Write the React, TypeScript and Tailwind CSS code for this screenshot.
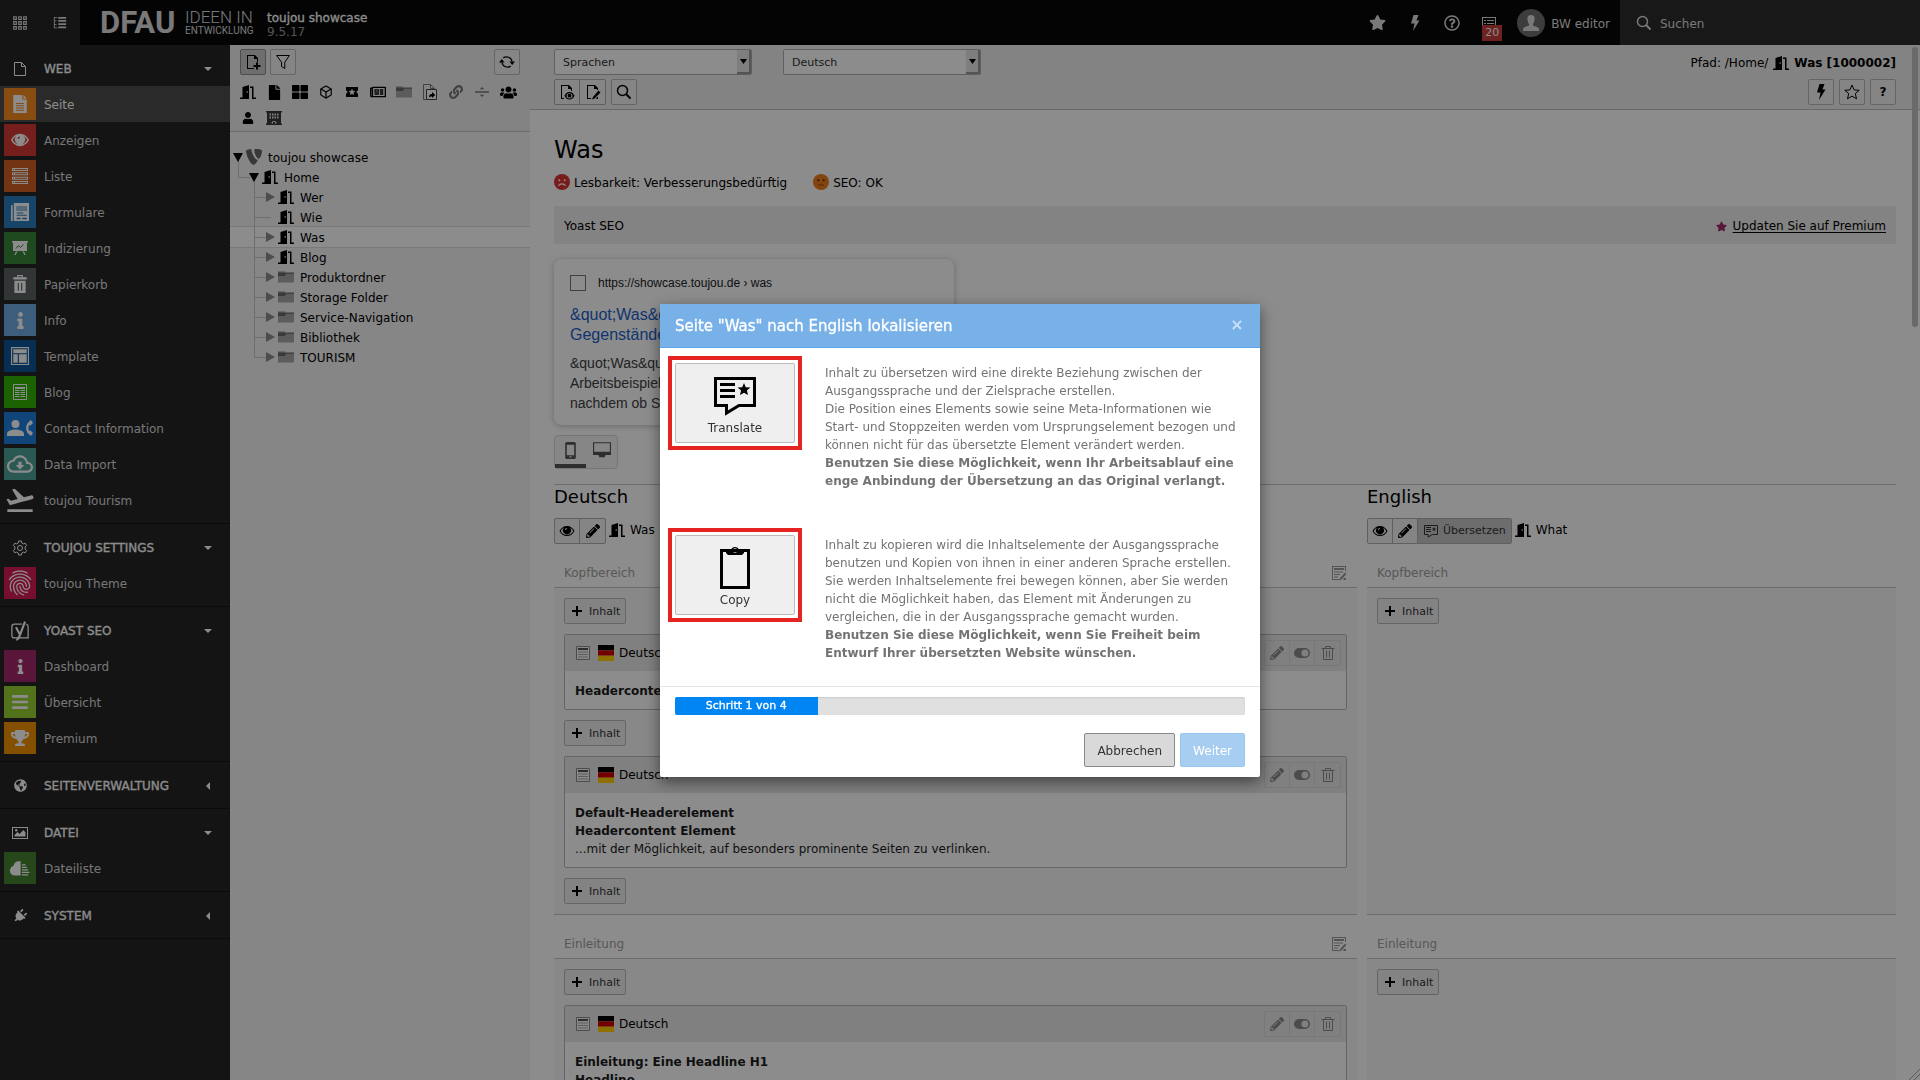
import type { ReactNode } from "react";
import {
  FaFile, FaThLarge, FaRegNewspaper, FaLink, FaUsers, FaUser, FaTrophy, FaBars, FaInfo,
  FaPlug, FaGlobeAmericas, FaStar, FaRegQuestionCircle, FaPencilAlt,
} from "react-icons/fa";
import { MdFlightTakeoff, MdFingerprint, MdOutlineCloudDownload } from "react-icons/md";
import { FiBox } from "react-icons/fi";

/* ---------- Icons ---------- */

type SvgProps = { size?: number; className?: string; children: ReactNode; stroke?: boolean };

function Svg({ size = 16, className = "", children, stroke }: SvgProps) {
  return (
    <svg
      width={size}
      height={size}
      viewBox="0 0 16 16"
      fill={stroke ? "none" : "currentColor"}
      stroke={stroke ? "currentColor" : "none"}
      className={`shrink-0 ${className}`}
      aria-hidden="true"
    >
      {children}
    </svg>
  );
}

const Pencil = () => <FaPencilAlt size={14} />;
const Door = () => (
  <Svg>
    <path fillRule="evenodd" d="M0 13.500h2.500V3L9 1v14H0zM6.600 7.200v1.600h1.200V7.200z" />
    <path d="M10 2.500h3.500v11H16V15h-4V4h-2z" />
  </Svg>
);
const Bolt = () => (
  <Svg>
    <path d="M6.500 0h5L9.500 5.500h3L6 16l1.500-7.500H4z" />
  </Svg>
);

const Eye = () => (
  <Svg>
    <path fillRule="evenodd" d="M8 3C4.500 3 2 5 .5 8 2 11 4.500 13 8 13s6-2 7.500-5C14 5 11.500 3 8 3zm0 9C5 12 3 10.500 1.700 8 2.500 6.500 3.600 5.400 5 4.700a4 4 0 1 0 6 0c1.400.7 2.500 1.800 3.300 3.300C13 10.500 11 12 8 12zM6 7a2 2 0 0 1 2-2v1a1 1 0 0 0-1 1z" />
  </Svg>
);
const Folder = () => (
  <Svg>
    <path fill="#a8a8a8" d="M0 4h16v9.500H0z" />
    <path fill="#6a6a6a" d="M0 3.500h16v1.300H8L7 7H0z" />
    <path fill="#8a8a8a" d="M0 2.500h7v1.500H0z" />
  </Svg>
);
const PageOutline = () => (
  <Svg stroke>
    <path d="M2.500 1.500h7l4 4v9h-11zM9.500 1.500v4h4" />
  </Svg>
);
const PageNew = () => (
  <Svg>
    <path d="M2 1h8l3 3v4h-1V5H9V2H3v12h6v1H2z" />
    <path d="M11 8.500h2V11h2.500v2H13v2.500h-2V13H8.500v-2H11z" />
  </Svg>
);
const PageEye = () => (
  <Svg>
    <path d="M2 1h8l3 3v3h-1V5H9V2H3v12h2v1H2z" />
    <path fillRule="evenodd" d="M10.500 8C8 8 6.500 9.500 5.500 11.700 6.500 14 8 15.500 10.500 15.500s4-1.500 5-3.800C14.500 9.500 13 8 10.500 8zm0 1.200a3 2.600 0 1 1 0 5.200 3 2.600 0 0 1 0-5.200z" />
    <circle cx="10.500" cy="11.700" r="1.900" />
  </Svg>
);
const PageEdit = () => (
  <Svg>
    <path d="M2 1h8l3 3v2h-1V5H9V2H3v12h3v1H2zM12 13h1v2h-2z" />
    <path d="M13.500 6.500 15.500 8.500 9.500 14.500 7 15.500 8 13z" />
  </Svg>
);
const Magnifier = () => (
  <Svg stroke>
    <circle cx="6.500" cy="6.500" r="5" strokeWidth="1.500" />
    <path d="m10.300 10.300 4.200 4.200" strokeWidth="2" />
  </Svg>
);
const Funnel = () => (
  <Svg stroke>
    <path d="M1.600 1.500h12.800L9.800 8.200v6.300L6.500 12.500V8.200z" />
  </Svg>
);
const Refresh = () => (
  <Svg>
    <path fill="none" stroke="currentColor" strokeWidth="1.300" d="M4.200 4A5.500 5.500 0 0 1 13 7.500M11.800 12A5.500 5.500 0 0 1 3 8.500" />
    <path d="M10.500 7.500H16L13.200 11zM0 8.500h5.500L2.800 5z" />
  </Svg>
);
const TicketStar = () => (
  <Svg>
    <path fillRule="evenodd" d="M2 3h12v3.500a1.500 1.500 0 0 0 0 3V13H2V9.500a1.500 1.500 0 0 0 0-3zm6 1.600-1 2.200-2.400.3 1.800 1.600-.5 2.400L8 9.900l2.100 1.200-.5-2.400 1.800-1.600L9 6.800z" />
  </Svg>
);
const Shortcut = () => (
  <Svg>
    <path fill="none" stroke="#777" d="M4.500 15.500h-3V.5h7l4 4v1M8.500.5v4h4" />
    <path fill="#fff" stroke="#444" d="M4.500 5.500h10v10h-10z" />
    <path fill="#000" d="M7 13.500c0-2.500 1-3.500 3-3.500V8l3.300 3-3.300 3v-1.500c-1.300 0-2.200.1-3 1z" />
  </Svg>
);
const Divider = () => (
  <Svg>
    <path d="M1 7.200h14v1.600H1zM8 3l2.200 2.200H5.800zM8 13l2.200-2.200H5.800z" />
  </Svg>
);
const Building = () => (
  <Svg>
    <path fillRule="evenodd" d="M0 1h16v1.500h-1v11h1V15H0v-1.500h1v-11H0zm3.500 2.500v2h1.500v-2zm2.500 0v2h1.500v-2zm2.500 0v2H10v-2zm2.500 0v2h1.500v-2zm-7.500 3v2h1.500v-2zm2.500 0v2h1.500v-2zm2.500 0v2H10v-2zm2.500 0v2h1.500v-2zM5.500 13.500H7V12h2v1.500h1.500a2.500 2.500 0 0 0-5 0z" />
  </Svg>
);
const Shield = () => (
  <Svg className="text-[#666]">
    <path d="M11.800 10.600c-.3.100-.5.100-.8.100-2.300 0-5.700-8-5.700-10.500 0-.1 0-.1 0-.2C2.500.3 0 1 0 1.900c0 3.500 4.400 13.900 7.600 13.900 1.500 0 3.500-2.300 4.200-5.200zM10.500.1c2.900 0 5.500.5 5.500 2.200 0 3.400-2.200 7.500-3.300 7.500-2 0-4.400-5.500-4.400-8.200 0-1.300.5-1.500 2.200-1.500z" />
  </Svg>
);
const Cog = () => (
  <Svg stroke>
    <path d="M6.700 1h2.600l.5 2 1.500.9 2-.6 1.300 2.200L13.100 7v2l1.500 1.500-1.300 2.200-2-.6-1.500.9-.5 2H6.700l-.5-2-1.500-.9-2 .6-1.300-2.200L2.900 9V7L1.400 5.500l1.300-2.200 2 .6L6.200 3z" />
    <circle cx="8" cy="8" r="2.500" />
  </Svg>
);
const ImageIcon = () => (
  <Svg>
    <path fillRule="evenodd" d="M0 2h16v12H0zm1 1v10h14V3z" />
    <path d="M2.500 11.500V10l3-3L7.500 9l4-4 2 2.500v4z" />
    <circle cx="4.200" cy="5.200" r="1.200" />
  </Svg>
);
const YoastIcon = () => (
  <Svg size={20} stroke>
    <path d="M9.500 2.500H3.500Q1.500 2.500 1.500 4.500v7q0 2 2 2H14.500v-9q0-1.500-1.500-2" />
    <path strokeWidth="1.700" d="M4.800 5 7.700 10.500M12 .5 8 11Q6.800 14.800 5 15" />
  </Svg>
);
const Trash = () => (
  <Svg stroke>
    <path d="M1.500 3.500h13M5.500 3.500v-2h5v2M3.500 3.500v11h9v-11M6.500 5.500v7M9.500 5.500v7" />
  </Svg>
);
const Toggle = () => (
  <Svg>
    <path fillRule="evenodd" d="M5 3h6a5 5 0 0 1 0 10H5A5 5 0 0 1 5 3zm6 1.500a3.500 3.500 0 1 0 0 7 3.500 3.500 0 0 0 0-7z" />
  </Svg>
);
const DocEdit = () => (
  <Svg className="text-[#9a9a9a]">
    <path d="M1 1h14v5h-1V2H2v12h6v1H1z" />
    <path d="M3 3h10v2H3zM3 6.500h9v1H3zM3 9h6v1H3zM3 11.500h4v1H3zM14 7.500l1.500 1.500-5 5.500-2.500 1 1-2.500zM13 13h2v2h-3z" />
  </Svg>
);
const ContentIcon = () => (
  <Svg className="text-[#777]">
    <path fill="#f8f8f8" stroke="#8a8a8a" d="M1.500 1.500h13v13h-13z" />
    <path fill="#555" d="M3 3h10v2H3z" />
    <path fill="#aaa" d="M3 6.500h10v1H3zM3 9h10v1H3zM3 11.500h10v1H3z" />
  </Svg>
);
const Flag = () => (
  <Svg>
    <path fill="#000" d="M0 0h16v5.400H0z" />
    <path fill="#d00000" d="M0 5.400h16v5.300H0z" />
    <path fill="#ffce00" d="M0 10.700h16V16H0z" />
  </Svg>
);
function TranslateIcon({ size = 16 }: { size?: number }) {
  return (
    <svg width={size} height={size} viewBox="0 0 48 48" aria-hidden="true" className="shrink-0">
      <path fill="none" stroke="currentColor" strokeWidth="3" d="M4.500 7.500h39v27H28L15.500 42v-7.500h-11z" />
      <path fill="currentColor" d="M9 12h15v3H9zM9 18h15v3H9zM9 24h15v3H9zM33 12l1.800 4.200 4.600.4-3.500 3 1.100 4.500L33 21.700l-4 2.400 1.100-4.500-3.500-3 4.600-.4z" />
    </svg>
  );
}
const ClipboardIcon = () => (
  <svg width="48" height="48" viewBox="0 0 48 48" aria-hidden="true">
    <path fill="none" stroke="currentColor" strokeWidth="3" d="M10.500 7.500h27v37h-27z" />
    <path fillRule="evenodd" fill="currentColor" d="M15 7h5a4.200 4.200 0 0 1 8 0h5v3l-2 2H17l-2-2zm9-1.800a2.300 2.300 0 1 0 0 4.600 2.300 2.300 0 0 0 0-4.600z" />
  </svg>
);
const StarOutline = () => (
  <Svg stroke>
    <path d="m8 1 2.100 4.900 5.100.4-3.900 3.300 1.200 5.200L8 12.100l-4.500 2.700 1.200-5.200L.8 6.300l5.100-.4z" />
  </Svg>
);
function Face({ sad }: { sad?: boolean }) {
  return (
    <Svg>
      <circle cx="8" cy="8" r="8" fill={sad ? "#dc3232" : "#ee7c1b"} />
      <circle cx="5.300" cy="6.300" r="1" fill={sad ? "#fff" : "#4a2500"} />
      <circle cx="10.700" cy="6.300" r="1" fill={sad ? "#fff" : "#4a2500"} />
      <path
        fill="none"
        stroke={sad ? "#fff" : "#a5571a"}
        strokeWidth="1.200"
        d={sad ? "M4.500 11.800c1.500-2.600 5.500-2.600 7 0" : "M5 11h6"}
      />
    </Svg>
  );
}

/* ---------- Module tiles ---------- */

const TilePage = () => (
  <Svg size={18}>
    <path fillRule="evenodd" d="M2 0h8v4h4v12H2zm2.500 7v1h7V7zm0 2v1h7V9zm0 2v1h7v-1zm0 2v1h7v-1z" />
    <path d="m11 0 3 3h-3z" />
  </Svg>
);
const TileEye = () => (
  <Svg size={18}>
    <path fillRule="evenodd" d="M8 2.500C4.500 2.500 1.500 5 0 8c1.500 3 4.500 5.500 8 5.500s6.500-2.500 8-5.500c-1.500-3-4.500-5.500-8-5.500zm0 9.700C5 12.200 2.700 10.200 1.500 8c.6-1.200 1.600-2.400 3-3.300a4.500 4.500 0 1 0 7 0c1.400.9 2.400 2.100 3 3.300-1.200 2.200-3.500 4.200-6.500 4.200zM5.800 7A2.200 2.200 0 0 1 8 4.800v1A1.300 1.300 0 0 0 6.800 7z" />
  </Svg>
);
const TileList = () => (
  <Svg>
    <path fillRule="evenodd" d="M0 0h16v3H0zm1 1v1h1V1zm2 0v1h12V1zM0 4.300h16v3H0zm1 1v1h1v-1zm2 0v1h12v-1zM0 8.700h16v3H0zm1 1v1h1v-1zm2 0v1h12v-1zM0 13h16v3H0zm1 1v1h1v-1zm2 0v1h12v-1z" />
  </Svg>
);
const TileForm = () => (
  <Svg size={18}>
    <path fillRule="evenodd" d="M2.500 0H16v16H2.500zM5 3v4h9V3zm0 5.500v.8h6v-.8zm0 2v.8h9v-.8zm0 2.500v1.500h3.500V13zm5 0v1.500h4V13z" />
    <path d="M0 2h1.500v14H0z" />
    <path fill="#9cc3e0" d="M5 3h9v4H5z" />
  </Svg>
);
const TileChart = () => (
  <Svg>
    <path d="M0 1h16v1.500h-1v8.500H1V2.500H0zM4 11.500h1.500L3.500 15H2.300zM12 11.500h-1.500l2 3.500h1.200z" />
    <path fill="none" stroke="#3a7a35" d="m4 8.500 2.500-3L8.500 7.500l3-3" />
  </Svg>
);
const TileTrash = () => (
  <Svg size={18}>
    <path fillRule="evenodd" d="M5.500 0h5v2H14v2H2V2h3.500zm1 1v1h3V1zM3 5h10v11H3zm3 2v7h1V7zm3 0v7h1V7z" />
  </Svg>
);
const TileTemplate = () => (
  <Svg size={18}>
    <path fill="none" stroke="currentColor" d="M.5.500h15v15H.5z" />
    <path d="M2 2h12v3.500H2zM2 6.500h4V14H2zM7 6.500h7V14H7z" />
  </Svg>
);
const TileBlog = () => (
  <Svg size={16}>
    <path fill="none" stroke="currentColor" d="M1.500.5h13v15h-13z" />
    <path d="M3 3h10v2H3zM3 6h4.500v1H3zM8.500 6H13v1H8.500zM3 8h4.500v1H3zM8.500 8H13v1H8.500zM3 10h4.500v1H3zM8.500 10H13v1H8.500zM3 12h4.500v1H3zM8.500 12H13v1H8.500z" />
  </Svg>
);
const TileContact = () => (
  <svg width="26" height="20" viewBox="0 0 26 20" fill="currentColor" aria-hidden="true">
    <circle cx="8.500" cy="6" r="4" />
    <path d="M0 18v-2.300C0 12.800 5.500 11.500 8.500 11.500S17 12.800 17 15.700V18zM24 2c-6.500 4-6.500 12 0 16l2-3-2.500-2.500-1.500.5c-.7-2-.7-4 0-6l1.500.5L26 5z" />
  </svg>
);
const TileCloud = () => (
  <Svg size={20}>
    <path d="M8.500 2.500H7A4.500 4.500 0 0 0 2.800 6.200 4 4 0 0 0 3.500 14h5z" />
    <path d="M9.500 5h3v1h-3zM9.500 7h4v1h-4zM9.500 9h5v1h-5zM9.500 11h6v1h-6zM9.500 13h5v1h-5z" />
  </Svg>
);

type Module = { label: string; tile: string; icon: ReactNode; active?: boolean };
type Group = { label: string; icon: ReactNode; open: boolean; items: Module[] };

const groups: Group[] = [
  {
    label: "WEB",
    icon: <PageOutline />,
    open: true,
    items: [
      { label: "Seite", tile: "bg-[#f68b1f]", icon: <TilePage />, active: true },
      { label: "Anzeigen", tile: "bg-[#d33a34]", icon: <TileEye /> },
      { label: "Liste", tile: "bg-[#cf5f22]", icon: <TileList /> },
      { label: "Formulare", tile: "bg-[#2b7fc0]", icon: <TileForm /> },
      { label: "Indizierung", tile: "bg-[#3a8638]", icon: <TileChart /> },
      { label: "Papierkorb", tile: "bg-[#5a6163]", icon: <TileTrash /> },
      { label: "Info", tile: "bg-[#6daae0]", icon: <FaInfo size={17} /> },
      { label: "Template", tile: "bg-[#0d5697]", icon: <TileTemplate /> },
      { label: "Blog", tile: "bg-[#32b400]", icon: <TileBlog /> },
      { label: "Contact Information", tile: "bg-[#1e7fdf]", icon: <TileContact /> },
      { label: "Data Import", tile: "bg-[#4ea29a]", icon: <MdOutlineCloudDownload size={26} /> },
      { label: "toujou Tourism", tile: "", icon: <MdFlightTakeoff size={32} /> },
    ],
  },
  {
    label: "TOUJOU SETTINGS",
    icon: <Cog />,
    open: true,
    items: [{ label: "toujou Theme", tile: "bg-[#d81b53]", icon: <MdFingerprint size={30} /> }],
  },
  {
    label: "YOAST SEO",
    icon: <YoastIcon />,
    open: true,
    items: [
      { label: "Dashboard", tile: "bg-[#a4286a]", icon: <FaInfo size={15} /> },
      { label: "Übersicht", tile: "bg-[#97cf34]", icon: <FaBars size={18} /> },
      { label: "Premium", tile: "bg-[#f29100]", icon: <FaTrophy size={18} /> },
    ],
  },
  { label: "SEITENVERWALTUNG", icon: <FaGlobeAmericas size={13} />, open: false, items: [] },
  {
    label: "DATEI",
    icon: <ImageIcon />,
    open: true,
    items: [{ label: "Dateiliste", tile: "bg-[#44812f]", icon: <TileCloud /> }],
  },
  { label: "SYSTEM", icon: <FaPlug size={14} className="rotate-45" />, open: false, items: [] },
];

function Sidebar() {
  return (
    <nav className="w-[230px] shrink-0 bg-[#262626] text-white" aria-label="Module">
      {groups.map((g) => (
        <section key={g.label} className="border-b border-[#131313] pb-[5px]">
          <button className="flex h-[41px] w-full items-center pt-1.5 pr-4 pl-1 font-medium">
            <span className="flex w-8 justify-center">{g.icon}</span>
            <span className="ml-2 flex-1 text-left [-webkit-text-stroke:0.3px]">{g.label}</span>
            <svg width="12" height="8" viewBox="0 0 12 8" fill="#fff" aria-hidden="true">
              {g.open ? <path d="M2 2h8L6 6z" /> : <path d="M8 0v8L4 4z" />}
            </svg>
          </button>
          {g.items.map((m) => (
            <a key={m.label} href="#" className={`flex h-9 items-center pl-1 ${m.active ? "bg-[#4d4d4d]" : ""}`}>
              <span className={`flex size-8 items-center justify-center ${m.tile}`}>{m.icon}</span>
              <span className={`ml-2 pt-0.5 ${m.active ? "text-white" : "text-[#d8d8d8]"}`}>{m.label}</span>
            </a>
          ))}
        </section>
      ))}
    </nav>
  );
}

/* ---------- Top bar ---------- */

function TopBar() {
  return (
    <header className="flex h-[45px] shrink-0 items-center bg-[#090909] text-[#dcdcdc]">
      <button className="flex h-full w-10 items-center justify-center bg-[#262626]" aria-label="Module umschalten">
        <Svg size={14} stroke>
          <path strokeWidth="1.300" d="M.8.8h3v3h-3zM6.500.8h3v3h-3zM12.200.8h3v3h-3zM.8 6.500h3v3h-3zM6.500 6.500h3v3h-3zM12.200 6.500h3v3h-3zM.8 12.200h3v3h-3zM6.500 12.200h3v3h-3zM12.200 12.200h3v3h-3z" />
        </Svg>
      </button>
      <button className="flex h-full w-10 items-center justify-center bg-[#262626]" aria-label="Seitenbaum umschalten">
        <Svg size={14}>
          <path d="M1 1h4v1H2v3h2v1H2v3h2v1H2v3h3v1H1zM6 1h9v2H6zM6 4.700h9v2H6zM6 8.400h9v2H6zM6 12.100h9v2H6z" />
        </Svg>
      </button>
      <a href="#" className="ml-5 flex items-center gap-2 font-['Roboto',sans-serif]">
        <span className="w-[77px] text-[31px] leading-[32px] font-bold">DFAU</span>
        <span className="flex w-[66px] flex-col whitespace-nowrap">
          <span className="text-[17px] leading-[16px] font-light">IDEEN IN</span>
          <span className="text-[10px] leading-[11px]">ENTWICKLUNG</span>
        </span>
      </a>
      <div className="ml-4 pt-1 leading-[14px]">
        <div className="font-medium text-white [-webkit-text-stroke:0.3px]">toujou showcase</div>
        <div className="text-[#9a9a9a]">9.5.17</div>
      </div>
      <div className="ml-auto flex h-full items-center">
        <button className="flex w-[37px] justify-center" aria-label="Lesezeichen"><FaStar size={17} /></button>
        <button className="flex w-[37px] justify-center" aria-label="Cache leeren"><Bolt /></button>
        <button className="flex w-[37px] justify-center" aria-label="Hilfe"><FaRegQuestionCircle size={16} /></button>
        <button className="relative flex w-[37px] justify-center" aria-label="Systeminformation">
          <Svg>
            <path d="M1 2h14v12H1zm1 1v10h12V3z" fillRule="evenodd" />
            <path d="M3 5h2v1H3zM6 5h7v1H6zM3 8h2v1H3zM6 8h7v1H6z" />
          </Svg>
          <span className="absolute top-[10px] left-3 bg-[#c83c3c] px-[3px] text-[11px] leading-4 text-white">20</span>
        </button>
        <button className="ml-2.5 flex items-center gap-1.5">
          <span className="flex size-7 items-end justify-center rounded-full bg-[#707070]">
            <svg width="28" height="28" viewBox="0 0 28 28" fill="#ddd" aria-hidden="true">
              <path d="M14 6c3 0 4 2 3.500 5-.2 2-1 3-1.500 4v1.500l5 2c1 .5 1 2 1 3.500H6c0-1.500 0-3 1-3.500l5-2V15c-.5-1-1.300-2-1.500-4C10 8 11 6 14 6z" />
            </svg>
          </span>
          <span className="pt-0.5">BW editor</span>
        </button>
        <label className="ml-2.5 flex h-full w-[300px] items-center gap-2 bg-[#2d2d2d] pl-4">
          <Magnifier />
          <input className="w-40 bg-transparent pt-0.5 outline-none placeholder:text-[#dcdcdc]" placeholder="Suchen" aria-label="Suchen" />
        </label>
      </div>
    </header>
  );
}

/* ---------- Page tree ---------- */

function IconButton({ label, children, pressed }: { label: string; children: ReactNode; pressed?: boolean }) {
  return (
    <button
      aria-label={label}
      className={`flex size-[26px] shrink-0 items-center justify-center rounded-xs border ${
        pressed ? "border-[#8c8c8c] bg-[#c8c8c8]" : "border-[#b8b8b8] bg-[#f2f2f2]"
      }`}
    >
      {children}
    </button>
  );
}

type Node = { label: string; depth: number; icon: "door" | "folder" | "root"; arrow: "open" | "closed" | "none"; last?: boolean; active?: boolean };

const nodes: Node[] = [
  { label: "toujou showcase", depth: 0, icon: "root", arrow: "open" },
  { label: "Home", depth: 1, icon: "door", arrow: "open" },
  { label: "Wer", depth: 2, icon: "door", arrow: "closed" },
  { label: "Wie", depth: 2, icon: "door", arrow: "none" },
  { label: "Was", depth: 2, icon: "door", arrow: "closed", active: true },
  { label: "Blog", depth: 2, icon: "door", arrow: "closed" },
  { label: "Produktordner", depth: 2, icon: "folder", arrow: "closed" },
  { label: "Storage Folder", depth: 2, icon: "folder", arrow: "closed" },
  { label: "Service-Navigation", depth: 2, icon: "folder", arrow: "closed" },
  { label: "Bibliothek", depth: 2, icon: "folder", arrow: "closed" },
  { label: "TOURISM", depth: 2, icon: "folder", arrow: "closed", last: true },
];

function Branch({ node }: { node: Node }) {
  const w = 16 * (node.depth + 1);
  const c = w - 8;
  return (
    <svg width={w} height="20" viewBox={`0 0 ${w} 20`} fill="none" className="shrink-0" aria-hidden="true">
      {node.depth > 0 && <path stroke="#c8c8c8" d={`M${c - 15.5} 0V10.500H${node.arrow === "none" ? c + 1 : c - 4}`} />}
      {node.depth === 2 && !node.last && <path stroke="#c8c8c8" d={`M${c - 15.5} 10V20`} />}
      {node.arrow === "open" && (
        <>
          <path stroke="#c8c8c8" d={`M${c + 0.5} 14V20`} />
          <path fill="#000" d={`M${c - 5} 6h10l-5 9z`} />
        </>
      )}
      {node.arrow === "closed" && <path fill="#8c8c8c" d={`M${c - 4} 5v10l9-5z`} />}
    </svg>
  );
}

function PageTree() {
  const icons: [string, ReactNode][] = [
    ["Eingang", <Door />],
    ["Seite", <FaFile size={15} />],
    ["Kacheln", <FaThLarge size={16} />],
    ["Produkt", <FiBox size={14} />],
    ["Ticket", <TicketStar />],
    ["News", <FaRegNewspaper size={16} />],
    ["Ordner", <Folder />],
    ["Verweis", <Shortcut />],
    ["Link", <FaLink size={14} className="text-[#777]" />],
    ["Trenner", <span className="text-[#777]"><Divider /></span>],
    ["Gruppe", <FaUsers size={17} />],
    ["Person", <FaUser size={12} />],
    ["Gebäude", <span className="text-[#3a3a3a]"><Building /></span>],
  ];
  return (
    <aside className="w-[300px] shrink-0 bg-[#f4f4f4] text-black">
      <div className="border-b border-[#c3c3c3] bg-[#eee] px-[5px] pt-1">
        <div className="flex gap-1 px-[5px]">
          <IconButton label="Neue Seite" pressed><PageNew /></IconButton>
          <IconButton label="Filter"><Funnel /></IconButton>
          <div className="flex-1" />
          <IconButton label="Neu laden"><Refresh /></IconButton>
        </div>
        <div className="mt-1 flex flex-wrap">
          {icons.map(([label, icon]) => (
            <button key={label} aria-label={label} className="flex size-[26px] items-center justify-center">
              {icon}
            </button>
          ))}
        </div>
      </div>
      <ul className="pt-[15px]">
        {nodes.map((n) => (
          <li
            key={n.label}
            className={`flex h-5 items-center ${n.active ? "bg-white shadow-[0_1px_0_#dcdcdc,0_-1px_0_#dcdcdc]" : ""}`}
          >
            <Branch node={n} />
            <span className="flex w-4 justify-center">
              {n.icon === "root" ? <Shield /> : n.icon === "door" ? <Door /> : <Folder />}
            </span>
            <span className="ml-1.5 pt-0.5">{n.label}</span>
          </li>
        ))}
      </ul>
    </aside>
  );
}

/* ---------- Page module ---------- */

function Dropdown({ label, value }: { label: string; value: string }) {
  return (
    <div className="relative w-[198px]">
      <select
        aria-label={label}
        className="h-[26px] w-full appearance-none rounded-xs border border-[#b0b0b0] bg-white pt-0.5 pl-2 text-[11px] text-[#333]"
      >
        <option>{value}</option>
      </select>
      <span className="pointer-events-none absolute inset-y-px right-px flex w-3.5 items-center justify-center border-r-2 border-b-2 border-[#999] bg-[#e6e6e6]">
        <svg width="7" height="5" viewBox="0 0 7 5" aria-hidden="true"><path d="M0 0h7L3.500 5z" /></svg>
      </span>
    </div>
  );
}

function ButtonGroup({ children }: { children: ReactNode }) {
  return <div className="flex divide-x divide-[#b0b0b0] rounded-xs border border-[#b0b0b0] bg-[#f2f2f2]">{children}</div>;
}

function GroupButton({ label, children }: { label: string; children: ReactNode }) {
  return (
    <button aria-label={label} className="flex h-6 w-[25px] items-center justify-center">
      {children}
    </button>
  );
}

function DocHeader() {
  return (
    <div className="border-b border-[#c0c0c0] bg-[#eee] pt-1 pr-6 pb-1 pl-6">
      <div className="flex h-[26px] items-center">
        <Dropdown label="Ansicht" value="Sprachen" />
        <div className="w-[31px]" />
        <Dropdown label="Sprache" value="Deutsch" />
        <div className="ml-auto flex items-center gap-[5px] pt-0.5">
          Pfad: /Home/ <Door /> <b>Was [1000002]</b>
        </div>
      </div>
      <div className="mt-1 flex gap-[5px]">
        <ButtonGroup>
          <GroupButton label="Ansehen"><PageEye /></GroupButton>
          <GroupButton label="Bearbeiten"><PageEdit /></GroupButton>
        </ButtonGroup>
        <IconButton label="Suchen"><Magnifier /></IconButton>
        <div className="flex-1" />
        <IconButton label="Cache leeren"><Bolt /></IconButton>
        <IconButton label="Lesezeichen"><StarOutline /></IconButton>
        <IconButton label="Hilfe"><b className="text-[12px]">?</b></IconButton>
      </div>
    </div>
  );
}

function AddContent() {
  return (
    <button className="flex h-[26px] w-[62px] items-center gap-[7px] rounded-xs border border-[#b8b8b8] bg-[#eee] pl-[7px] text-[11px] text-[#333]">
      <svg width="10" height="10" viewBox="0 0 10 10" className="shrink-0" aria-hidden="true">
        <path stroke="#000" strokeWidth="2" d="M5 0v10M0 5h10" />
      </svg>
      <span className="pt-0.5">Inhalt</span>
    </button>
  );
}

function Card({ children }: { children: ReactNode }) {
  return (
    <article className="rounded-xs border border-[#b8b8b8] bg-white">
      <header className="flex h-9 items-center bg-[#e9e9e9] pr-[5px] pl-2.5">
        <ContentIcon />
        <span className="ml-[7px] flex items-center gap-[5px]"><Flag /> Deutsch</span>
        <div className="ml-auto flex divide-x divide-[#dadada] rounded-xs border border-[#dadada] text-[#8a8a8a]">
          <GroupButton label="Bearbeiten"><Pencil /></GroupButton>
          <GroupButton label="Verbergen"><Toggle /></GroupButton>
          <GroupButton label="Löschen"><Trash /></GroupButton>
        </div>
      </header>
      <div className="px-2.5 pt-[11px] pb-[9px] leading-[18px] text-[#1c1c1c]">{children}</div>
    </article>
  );
}

function Column({ title, editable, children }: { title: string; editable?: boolean; children: ReactNode }) {
  return (
    <section className="flex flex-col">
      <h3 className="flex h-11 items-center justify-between border-b border-[#c4c4c4] px-2.5 pt-3.5 text-[#a0a0a0]">
        {title}
        {editable && <DocEdit />}
      </h3>
      <div className="flex flex-1 flex-col gap-[10px] border-b border-[#c4c4c4] bg-[#f8f8f8] p-2.5">{children}</div>
    </section>
  );
}

function SnippetPreview() {
  return (
    <div className="mt-[15px] h-[166px] w-[400px] rounded-lg bg-white p-4 font-['Liberation_Sans',sans-serif] shadow-[0_1px_6px_rgba(32,33,36,0.28)]">
      <div className="flex items-center gap-3 text-[12px] text-[#202124]">
        <span className="size-4 border border-[#777]" />
        https://showcase.toujou.de › was
      </div>
      <div className="mt-[14px] text-[16px] leading-5 text-[#1a62cc]">
        &amp;quot;Was&amp;quot;
        <br />
        Gegenstände
      </div>
      <div className="mt-2 text-[14px] leading-5 text-[#3c4043]">
        &amp;quot;Was&amp;quot;
        <br />
        Arbeitsbeispiele
        <br />
        nachdem ob Sie
      </div>
    </div>
  );
}

function PageModule() {
  return (
    <main className="relative min-w-0 flex-1 bg-white text-black">
      <DocHeader />
      <div className="px-6 pt-6">
        <h1 className="text-[24px] leading-[32px]">Was</h1>
        <div className="mt-2 flex h-4 items-center gap-1">
          <Face sad /> <span className="pt-0.5">Lesbarkeit: Verbesserungsbedürftig</span>
          <span className="w-[18px]" />
          <Face /> <span className="pt-0.5">SEO: OK</span>
        </div>
        <div className="mt-4 flex h-[38px] items-center justify-between bg-[#eee] px-2.5">
          <span className="pt-0.5">Yoast SEO</span>
          <span className="flex items-center gap-1.5 pt-0.5">
            <FaStar size={11} className="text-[#a4286a]" />
            <a href="#" className="underline underline-offset-2">Updaten Sie auf Premium</a>
          </span>
        </div>
        <SnippetPreview />
        <div className="mt-[10px] flex h-[34px] w-16 rounded border border-[#d6d6d6] bg-[#f5f5f5] text-[#555]">
          <button aria-label="Mobile Vorschau" className="flex flex-1 items-center justify-center border-b-4 border-[#555]">
            <Svg size={17}>
              <path fillRule="evenodd" d="M4.500 0h7A1.500 1.500 0 0 1 13 1.500v13a1.500 1.500 0 0 1-1.500 1.500h-7A1.500 1.500 0 0 1 3 14.500v-13A1.500 1.500 0 0 1 4.500 0zm0 2.500v10h7v-10zM7 13.500v1h2v-1z" />
            </Svg>
          </button>
          <button aria-label="Desktop Vorschau" className="flex flex-1 items-center justify-center pb-1">
            <Svg size={18}>
              <path fillRule="evenodd" d="M0 1h16v11.500h-5v1H10.500v1h-5v-1H5v-1H0zm1 1v7.500h14V2z" />
            </Svg>
          </button>
        </div>
        <div className="mt-[15px] grid grid-cols-[803fr_529fr] gap-x-[10px] border-t border-[#c4c4c4]">
          <div>
            <h2 className="text-[18px] leading-[24px]">Deutsch</h2>
            <div className="mt-[9px] flex items-center">
              <ButtonGroup>
                <GroupButton label="Ansehen"><Eye /></GroupButton>
                <GroupButton label="Bearbeiten"><Pencil /></GroupButton>
              </ButtonGroup>
              <span className="ml-[3px] flex items-center gap-[5px] pb-0.5"><Door /> Was</span>
            </div>
          </div>
          <div>
            <h2 className="text-[18px] leading-[24px]">English</h2>
            <div className="mt-[9px] flex items-center">
              <ButtonGroup>
                <GroupButton label="Ansehen"><Eye /></GroupButton>
                <GroupButton label="Bearbeiten"><Pencil /></GroupButton>
                <button className="flex h-6 items-center gap-1 bg-[#c6c6c6] px-[5px] text-[11px] text-[#333]">
                  <TranslateIcon /> Übersetzen
                </button>
              </ButtonGroup>
              <span className="ml-[3px] flex items-center gap-[5px] pb-0.5"><Door /> What</span>
            </div>
          </div>
          <Column title="Kopfbereich" editable>
            <AddContent />
            <Card><b>Headercontent Element</b></Card>
            <AddContent />
            <Card>
              <b>Default-Headerelement</b>
              <br />
              <b>Headercontent Element</b>
              <br />
              ...mit der Möglichkeit, auf besonders prominente Seiten zu verlinken.
            </Card>
            <AddContent />
          </Column>
          <Column title="Kopfbereich"><AddContent /></Column>
          <Column title="Einleitung" editable>
            <AddContent />
            <Card>
              <b>Einleitung: Eine Headline H1</b>
              <br />
              <b>Headline</b>
            </Card>
          </Column>
          <Column title="Einleitung"><AddContent /></Column>
        </div>
      </div>
      <div className="absolute top-0.5 right-0.5 h-[280px] w-1.5 rounded-full bg-[#c2c2c2]" />
      <svg width="12" height="12" viewBox="0 0 12 12" className="absolute right-0 bottom-0" aria-hidden="true">
        <path stroke="#a0a0a0" d="M1 12 12 1M6 12l6-6" />
      </svg>
    </main>
  );
}

/* ---------- Localization wizard ---------- */

function Choice({ label, icon, text, hint }: { label: string; icon: ReactNode; text: string[]; hint: string }) {
  return (
    <div className="flex items-start pl-2">
      <div className="shrink-0 border-4 border-[#e52421] p-[3px]">
        <button className="flex h-20 w-[120px] flex-col items-center rounded-xs border border-[#bbb] bg-[#efefef] pt-[7px] leading-[18px] text-[#333]">
          <span className="text-black">{icon}</span>
          {label}
        </button>
      </div>
      <p className="mt-2 ml-[23px] w-[420px] text-[#737373]">
        {text.map((t) => (
          <span key={t} className="block">{t}</span>
        ))}
        <b>{hint}</b>
      </p>
    </div>
  );
}

function Wizard() {
  return (
    <div className="fixed inset-0 flex items-center justify-center bg-black/45">
      <div role="dialog" aria-labelledby="wizard-title" className="w-[600px] rounded-xs bg-white shadow-[0_5px_15px_rgba(0,0,0,0.5)]">
        <header className="flex h-11 items-center justify-between border-b border-[#5ea5e6] bg-[#78b1e7] px-[15px] text-white">
          <h2 id="wizard-title" className="pt-0.5 text-[15px] font-medium [-webkit-text-stroke:0.3px]">Seite "Was" nach English lokalisieren</h2>
          <button aria-label="Schließen" className="flex w-4 justify-center text-[16px] font-bold text-[#c9e0f6]">×</button>
        </header>
        <div className="flex flex-col gap-[38px] pt-2 pb-6 leading-[18px]">
          <Choice
            label="Translate"
            icon={<TranslateIcon size={48} />}
            text={[
              "Inhalt zu übersetzen wird eine direkte Beziehung zwischen der Ausgangssprache und der Zielsprache erstellen.",
              "Die Position eines Elements sowie seine Meta-Informationen wie Start- und Stoppzeiten werden vom Ursprungselement bezogen und können nicht für das übersetzte Element verändert werden.",
            ]}
            hint="Benutzen Sie diese Möglichkeit, wenn Ihr Arbeitsablauf eine enge Anbindung der Übersetzung an das Original verlangt."
          />
          <Choice
            label="Copy"
            icon={<ClipboardIcon />}
            text={[
              "Inhalt zu kopieren wird die Inhaltselemente der Ausgangssprache benutzen und Kopien von ihnen in einer anderen Sprache erstellen. Sie werden Inhaltselemente frei bewegen können, aber Sie werden nicht die Möglichkeit haben, das Element mit Änderungen zu vergleichen, die in der Ausgangssprache gemacht wurden.",
            ]}
            hint="Benutzen Sie diese Möglichkeit, wenn Sie Freiheit beim Entwurf Ihrer übersetzten Website wünschen."
          />
        </div>
        <footer className="border-t border-[#e5e5e5] px-[15px] pt-[10px] pb-[10px]">
          <div className="h-[18px] overflow-hidden rounded-xs bg-[#e0e0e0] shadow-[inset_0_1px_2px_rgba(0,0,0,0.1)]">
            <div className="h-full w-1/4 bg-[#0085f2] text-center text-[11px] leading-[18px] text-white [-webkit-text-stroke:0.3px]">Schritt 1 von 4</div>
          </div>
          <div className="mt-[18px] flex justify-end gap-[5px]">
            <button className="h-[34px] rounded-xs border border-[#888] bg-[#d9d9d9] px-3 pt-0.5 text-[#333]">Abbrechen</button>
            <button disabled className="h-[34px] rounded-xs border border-[#97c6ee] bg-[#a7cdf0] px-3 pt-0.5 text-white">Weiter</button>
          </div>
        </footer>
      </div>
    </div>
  );
}

export default function App() {
  return (
    <div className="flex h-screen flex-col overflow-hidden bg-[#262626] font-['DejaVu_Sans',sans-serif] text-[12px] leading-4">
      <TopBar />
      <div className="flex min-h-0 flex-1">
        <Sidebar />
        <PageTree />
        <PageModule />
      </div>
      <Wizard />
    </div>
  );
}
